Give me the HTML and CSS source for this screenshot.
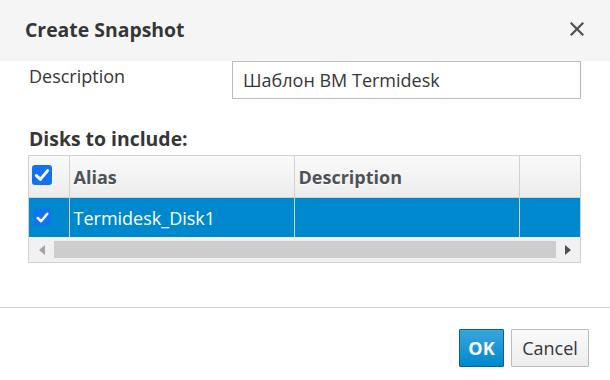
FILE: index.html
```html
<!DOCTYPE html>
<html lang="en">
<head>
  <meta charset="UTF-8" />
  <title>Create Snapshot</title>
  <link rel="stylesheet" href="styles.css">
</head>
<body>
  <div class="modal">
    <div class="modal-header">
      <h4 class="modal-title">Create Snapshot</h4>
      <button class="close" aria-label="Close">
        <svg width="14" height="14" viewBox="0 0 14 14"><path d="M1.5 1.5 L12.5 12.5 M12.5 1.5 L1.5 12.5" stroke="#4d5258" stroke-width="2.2" stroke-linecap="square"/></svg>
      </button>
    </div>

    <div class="modal-body">
      <div class="form-row">
        <label class="form-label" for="desc">Description</label>
        <input class="form-input" id="desc" type="text" value="Шаблон ВМ Termidesk" />
      </div>

      <div class="section-title">Disks to include:</div>

      <div class="grid">
        <table class="grid-table">
          <colgroup>
            <col class="col-check" />
            <col class="col-alias" />
            <col class="col-desc" />
            <col />
          </colgroup>
          <thead>
            <tr>
              <th class="cell-check"><span class="check check-lg"><svg viewBox="0 0 16 16"><path d="M3.5 8.5 L6.7 11.5 L12.5 4.5" fill="none" stroke="#fff" stroke-width="2.4" stroke-linecap="round" stroke-linejoin="round"/></svg></span></th>
              <th>Alias</th>
              <th>Description</th>
              <th></th>
            </tr>
          </thead>
          <tbody>
            <tr class="selected">
              <td class="cell-check"><span class="check"><svg viewBox="0 0 16 16"><path d="M3.5 8.5 L6.7 11.5 L12.5 4.5" fill="none" stroke="#fff" stroke-width="2.4" stroke-linecap="round" stroke-linejoin="round"/></svg></span></td>
              <td>Termidesk_Disk1</td>
              <td></td>
              <td></td>
            </tr>
          </tbody>
        </table>
        <div class="hscroll">
          <span class="arrow arrow-left"></span>
          <span class="thumb"></span>
          <span class="arrow arrow-right"></span>
        </div>
      </div>
    </div>

    <div class="modal-footer">
      <button class="btn btn-primary">OK</button>
      <button class="btn btn-default">Cancel</button>
    </div>
  </div>
</body>
</html>
```

FILE: styles.css
```css
/* Global */
body {
  margin: 0;
  font-family: 'Open Sans', 'Noto Sans', sans-serif;
  color: #363636;
  background: #fff;
}
/* Modal */
.modal {
  width: 610px;
  height: 380px;
  background: #fff;
  display: flex;
  flex-direction: column;
}
.modal-header {
  height: 61px;
  flex: none;
  background: #f5f5f5;
  display: flex;
  align-items: center;
  justify-content: space-between;
  padding: 0 25px 0 25px;
}
.modal-title {
  margin: -2px 0 0 0;
  font-size: 19.4px;
  font-weight: 700;
  color: #363636;
}
.close {
  border: none;
  background: none;
  padding: 0;
  width: 14px;
  height: 14px;
  margin-right: 1px;
  margin-top: -3px;
  display: flex;
  cursor: pointer;
}
/* Body */
.modal-body {
  padding: 0 29px 0 28px;
  flex: 1;
}
.form-row {
  display: flex;
  align-items: flex-start;
}
.form-label {
  width: 203px;
  padding: 4px 0 0 1px;
  font-size: 18px;
  line-height: 22px;
}
.form-input {
  flex: 1;
  box-sizing: border-box;
  height: 38px;
  margin: 0;
  border: 1px solid #bbb;
  padding: 0 10px;
  font: 18px 'Open Sans', 'Noto Sans', sans-serif;
  color: #363636;
  outline: none;
}
.section-title {
  margin: 29px 0 5px 1px;
  font-size: 19.4px;
  line-height: 22px;
  font-weight: 700;
}
/* Grid */
.grid {
  border: 1px solid #d1d1d1;
}
.grid-table {
  width: 100%;
  border-collapse: collapse;
  table-layout: fixed;
}
.col-check { width: 40px; }
.col-alias { width: 225px; }
.col-desc { width: 225px; }
.grid-table th {
  height: 41px;
  background: linear-gradient(#fafafa, #ececec);
  border-right: 1px solid #d1d1d1;
  border-bottom: 1px solid #d1d1d1;
  text-align: left;
  padding: 0 0 0 4px;
  font-size: 18px;
  font-weight: 700;
  color: #4d5258;
  text-shadow: 0 1px 1px #fff;
}
.grid-table th:last-child,
.grid-table td:last-child {
  border-right: none;
}
.grid-table td {
  height: 39px;
  padding: 0 0 0 4px;
  border-right: 1px solid #d1d1d1;
  font-size: 18px;
}
.grid-table .cell-check {
  padding: 0;
}
.selected td {
  background: #0088ce;
  color: #fff;
}
/* Checkboxes */
.check {
  display: flex;
  width: 17px;
  height: 17px;
  margin: 0 0 0 5px;
  border-radius: 3px;
  background: #1272f0;
}
.check-lg {
  width: 20px;
  height: 20px;
  margin-left: 3px;
  margin-top: -3px;
}
.check svg {
  width: 100%;
  height: 100%;
}
/* Scrollbar */
.hscroll {
  height: 25px;
  background: #f1f1f1;
  display: flex;
  align-items: center;
  padding: 0 9px 0 9px;
  gap: 9px;
}
.thumb {
  flex: 1;
  height: 17px;
  background: #cdcdcd;
}
.arrow {
  width: 0;
  height: 0;
  border-top: 5px solid transparent;
  border-bottom: 5px solid transparent;
}
.arrow-left {
  border-right: 6px solid #a3a3a3;
  margin-left: 1px;
}
.arrow-right {
  border-left: 6px solid #505050;
}
/* Footer */
.modal-footer {
  border-top: 1px solid #d1d1d1;
  height: 73px;
  box-sizing: border-box;
  display: flex;
  justify-content: flex-end;
  align-items: flex-start;
  gap: 7px;
  padding: 21px 21px 0 0;
}
.btn {
  height: 38px;
  box-sizing: border-box;
  font: 18px 'Open Sans', 'Noto Sans', sans-serif;
  padding: 0 6px;
  border-radius: 1px;
  cursor: pointer;
}
.btn-primary {
  width: 45px;
  background: linear-gradient(#39a5dc, #0088ce);
  border: 1px solid #00659c;
  color: #fff;
  font-weight: 700;
}
.btn-default {
  width: 78px;
  background: linear-gradient(#fafafa, #ededed);
  border: 1px solid #bbb;
  color: #363636;
}
```
